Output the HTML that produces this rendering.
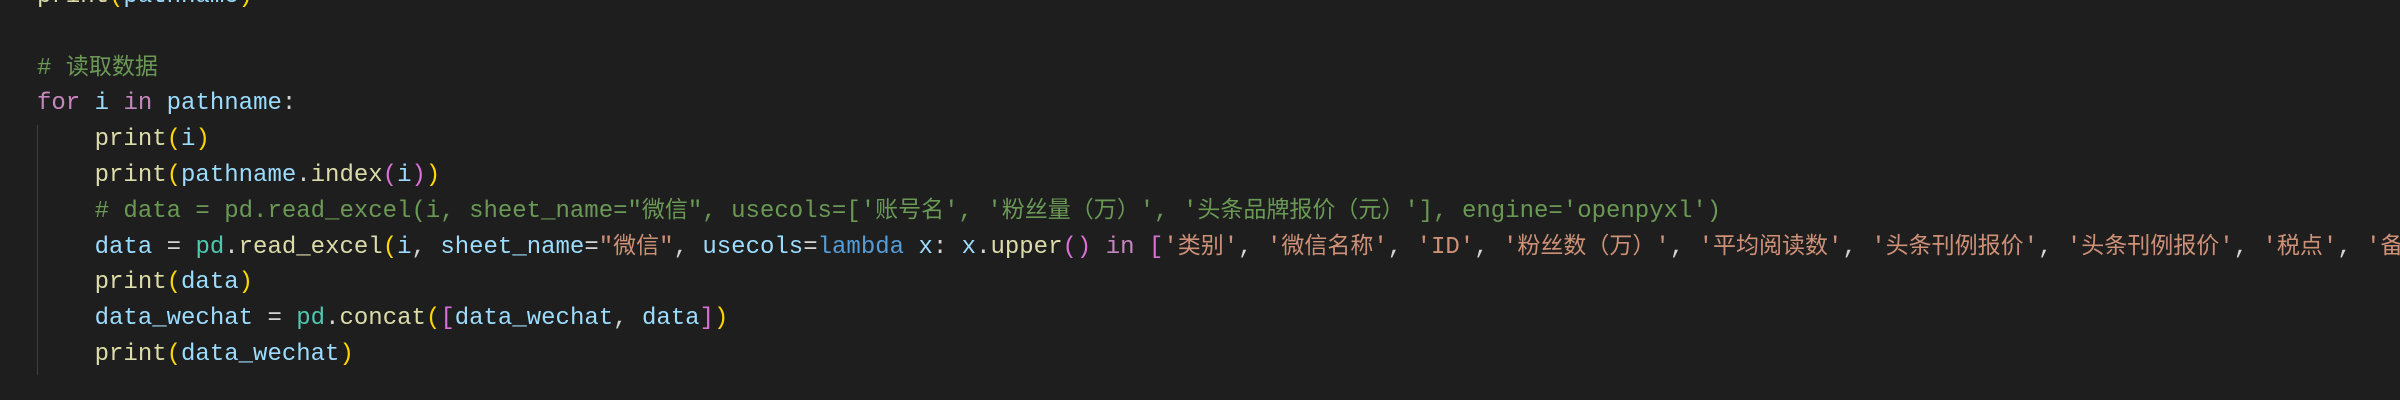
<!DOCTYPE html>
<html><head><meta charset="utf-8"><style>
html,body{margin:0;padding:0;background:#1e1e1e;width:2400px;height:400px;overflow:hidden}
#c{position:absolute;left:37px;top:-21px;font-family:"Liberation Mono","Noto Sans CJK SC",monospace;font-size:24px;line-height:35.8px;white-space:pre;color:#d4d4d4;width:4000px}
.k{color:#c586c0}.v{color:#9cdcfe}.f{color:#dcdcaa}.s{color:#ce9178}.c{color:#6a9955}.t{color:#4ec9b0}.y{color:#ffd700}.p{color:#da70d6}.b{color:#569cd6}
.z{font-family:"Noto Sans CJK SC",sans-serif;font-size:23px;line-height:1}
#g{position:absolute;left:37px;top:125px;width:1px;height:250px;background:#404040}
</style></head><body>
<div id="g"></div>
<div id="c"><span class="f">print</span><span class="y">(</span><span class="v">pathname</span><span class="y">)</span>

<span class="c"># <span class="z">读取数据</span></span>
<span class="k">for</span> <span class="v">i</span> <span class="k">in</span> <span class="v">pathname</span>:
    <span class="f">print</span><span class="y">(</span><span class="v">i</span><span class="y">)</span>
    <span class="f">print</span><span class="y">(</span><span class="v">pathname</span>.<span class="f">index</span><span class="p">(</span><span class="v">i</span><span class="p">)</span><span class="y">)</span>
    <span class="c"># data = pd.read_excel(i, sheet_name="<span class="z">微信</span>", usecols=['<span class="z">账号名</span>', '<span class="z">粉丝量（万）</span>', '<span class="z">头条品牌报价（元）</span>'], engine='openpyxl')</span>
    <span class="v">data</span> = <span class="t">pd</span>.<span class="f">read_excel</span><span class="y">(</span><span class="v">i</span>, <span class="v">sheet_name</span>=<span class="s">"<span class="z">微信</span>"</span>, <span class="v">usecols</span>=<span class="b">lambda</span> <span class="v">x</span>: <span class="v">x</span>.<span class="f">upper</span><span class="p">()</span> <span class="k">in</span> <span class="p">[</span><span class="s">'<span class="z">类别</span>'</span>, <span class="s">'<span class="z">微信名称</span>'</span>, <span class="s">'ID'</span>, <span class="s">'<span class="z">粉丝数（万）</span>'</span>, <span class="s">'<span class="z">平均阅读数</span>'</span>, <span class="s">'<span class="z">头条刊例报价</span>'</span>, <span class="s">'<span class="z">头条刊例报价</span>'</span>, <span class="s">'<span class="z">税点</span>'</span>, <span class="s">'<span class="z">备注</span>'</span><span class="p">]</span><span class="y">)</span>
    <span class="f">print</span><span class="y">(</span><span class="v">data</span><span class="y">)</span>
    <span class="v">data_wechat</span> = <span class="t">pd</span>.<span class="f">concat</span><span class="y">(</span><span class="p">[</span><span class="v">data_wechat</span>, <span class="v">data</span><span class="p">]</span><span class="y">)</span>
    <span class="f">print</span><span class="y">(</span><span class="v">data_wechat</span><span class="y">)</span>
</div>
</body></html>
